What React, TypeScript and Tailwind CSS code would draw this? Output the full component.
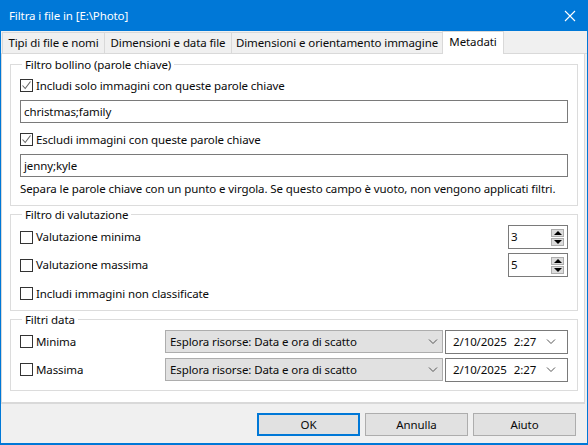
const Check = ({ on }: { on?: boolean }) => (
  <span className="w-[13px] h-[13px] border border-[#333] bg-white flex items-center justify-center shrink-0">
    {on && (
      <svg width="11" height="11" viewBox="0 0 11 11">
        <path d="M1.5 5.5 L4.2 8.5 L9.5 1.5" fill="none" stroke="#666" strokeWidth="1.1" />
      </svg>
    )}
  </span>
);

const CheckRow = ({ on, label, className }: { on?: boolean; label: string; className?: string }) => (
  <div className={"flex items-center gap-[3px] h-[17px] " + (className ?? "")}>
    <Check on={on} />
    <span>{label}</span>
  </div>
);

const Chevron = () => (
  <svg width="10" height="6" viewBox="0 0 10 6" className="shrink-0">
    <path d="M1 0.5 L5 4.5 L9 0.5" fill="none" stroke="#555" strokeWidth="1" />
  </svg>
);

const Group = ({ title, className, children }: { title: string; className: string; children: React.ReactNode }) => (
  <fieldset className={"border border-[#dcdcdc] ml-[8px] mr-[6px] pl-[9px] pr-[9px] min-w-0 " + className}>
    <legend className="ml-[2px] px-[3px] h-[13px] leading-[13px]">{title}</legend>
    {children}
  </fieldset>
);

const Spin = ({ v, className }: { v: string; className?: string }) => (
  <div className={"w-[60px] h-[24px] border border-[#7a7a7a] bg-white flex items-center justify-between pl-[2px] pr-[3px] " + (className ?? "")}>
    <span>{v}</span>
    <div className="flex flex-col gap-[1px]">
      <div className="w-[13px] h-[8px] bg-[#dcdcdc] border border-[#adadad] flex items-center justify-center">
        <span className="w-0 h-0 border-l-[4px] border-r-[4px] border-b-[4px] border-l-transparent border-r-transparent border-b-black" />
      </div>
      <div className="w-[13px] h-[8px] bg-[#dcdcdc] border border-[#adadad] flex items-center justify-center">
        <span className="w-0 h-0 border-l-[4px] border-r-[4px] border-t-[4px] border-l-transparent border-r-transparent border-t-black" />
      </div>
    </div>
  </div>
);

const DateRow = ({ label, className }: { label: string; className?: string }) => (
  <div className={"flex items-start h-[24px] " + (className ?? "")}>
    <CheckRow label={label} className="w-[145px] mt-[3px]" />
    <div className="w-[278px] h-[23px] bg-[#e1e1e1] border border-[#adadad] flex items-center justify-between pl-[4px] pr-[4px]">
      <span>Esplora risorse: Data e ora di scatto</span>
      <Chevron />
    </div>
    <div className="ml-[2px] w-[123px] h-[24px] border border-[#7a7a7a] bg-white flex items-center pl-[7px]">
      <span className="w-[81px] whitespace-nowrap flex">
        <span>2/10/2025</span>
        <span className="ml-[7px]">2:27</span>
      </span>
      <span className="ml-[12px] flex">
        <Chevron />
      </span>
    </div>
  </div>
);

const Btn = ({ label, def, className }: { label: string; def?: boolean; className?: string }) => (
  <div className={"h-[23px] flex items-center justify-center bg-[#e1e1e1] " + (def ? "border-2 border-[#0078d7] " : "border border-[#adadad] ") + (className ?? "")}>
    {label}
  </div>
);

const Tab = ({ label, className }: { label: string; className: string }) => (
  <div className={"h-[21px] whitespace-nowrap bg-[#f0f0f0] border border-b-0 border-[#d9d9d9] -ml-px flex items-center justify-center " + className}>{label}</div>
);

export default function App() {
  return (
    <div
      className="w-[588px] h-[445px] flex flex-col bg-[#0078d7] text-[11.5px] tracking-[-0.1px] leading-[16px] text-[#0a0a0a] overflow-hidden border-[#0078d7] border-t-0 border-b-2 border-x"
      style={{ fontFamily: '"Noto Sans", "Open Sans", sans-serif' }}
    >
      <div className="h-[31px] shrink-0 flex items-center justify-between pl-[8px] pr-[11px] text-white">
        <span>Filtra i file in [E:\Photo]</span>
        <svg width="12" height="12" viewBox="0 0 12 12">
          <path d="M1 1 L11 11 M11 1 L1 11" stroke="#fff" strokeWidth="1.1" />
        </svg>
      </div>
      <div className="flex-1 bg-[#f0f0f0] flex flex-col">
        <div className="h-[23px] flex items-end pl-[2px] shrink-0 border-b border-[#d9d9d9]">
          <Tab label="Tipi di file e nomi" className="w-[103px]" />
          <Tab label="Dimensioni e data file" className="w-[128px]" />
          <Tab label="Dimensioni e orientamento immagine" className="w-[212px]" />
          <div className="h-[23px] -mb-px -ml-px w-[62px] bg-white border border-b-0 border-[#d9d9d9] flex items-center justify-center pb-[3px]">Metadati</div>
        </div>
        <div className="flex-1 flex flex-col bg-white border-b-2 border-x border-[#d9d9d9] mr-[2px]">
          <Group title="Filtro bollino (parole chiave)" className="mt-[4px] h-[148px]">
            <CheckRow on label="Includi solo immagini con queste parole chiave" className="mt-[6px]" />
            <div className="mt-[6px] h-[23px] border border-[#7a7a7a] flex items-center px-[3px]">christmas;family</div>
            <CheckRow on label="Escludi immagini con queste parole chiave" className="mt-[8px]" />
            <div className="mt-[6px] h-[23px] border border-[#7a7a7a] flex items-center px-[3px]">jenny;kyle</div>
            <p className="mt-[4px] whitespace-nowrap">Separa le parole chiave con un punto e virgola. Se questo campo è vuoto, non vengono applicati filtri.</p>
          </Group>
          <Group title="Filtro di valutazione" className="mt-[2px] h-[103px]">
            <div className="flex items-center justify-between mt-[4px]">
              <CheckRow label="Valutazione minima" />
              <Spin v="3" />
            </div>
            <div className="flex items-center justify-between mt-[4px]">
              <CheckRow label="Valutazione massima" />
              <Spin v="5" />
            </div>
            <CheckRow label="Includi immagini non classificate" className="mt-[8px]" />
          </Group>
          <Group title="Filtri data" className="mt-[2px] h-[78px]">
            <DateRow label="Minima" className="mt-[4px]" />
            <DateRow label="Massima" className="mt-[4px]" />
          </Group>
        </div>
        <div className="h-[39px] shrink-0 flex items-start pt-[9px] pl-[256px] gap-[5px]">
          <Btn label="OK" def className="w-[103px]" />
          <Btn label="Annulla" className="w-[103px]" />
          <Btn label="Aiuto" className="w-[103px]" />
        </div>
      </div>
    </div>
  );
}
